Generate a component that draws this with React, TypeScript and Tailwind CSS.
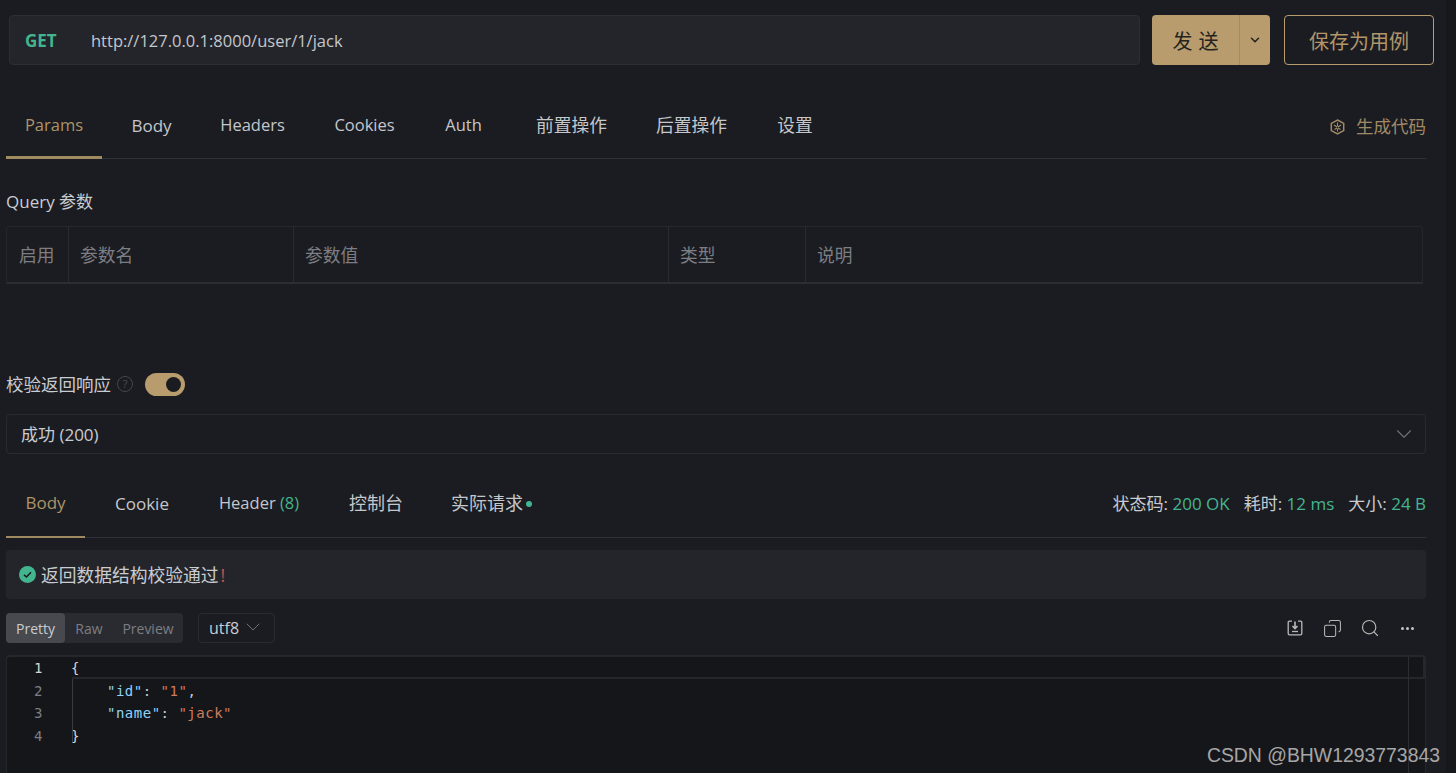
import { ChevronDown, Copy, Search } from "lucide-react"

const sans = "font-['Segoe_UI','Open_Sans','Noto_Sans_CJK_SC',sans-serif]"

const requestTabs = [
  { label: "Params", width: "w-[96px]", gap: "mr-[30px]", size: "text-[16.5px]", active: true },
  { label: "Body", width: "w-[39px]", gap: "mr-[50px]", size: "text-[17px]" },
  { label: "Headers", width: "w-[63px]", gap: "mr-[50px]", size: "text-[16.5px]" },
  { label: "Cookies", width: "w-[61px]", gap: "mr-[50px]", size: "text-[16.5px]" },
  { label: "Auth", width: "w-[37px]", gap: "mr-[54px]", size: "text-[16.5px]" },
  { label: "前置操作", width: "w-[71px]", gap: "mr-[49px]", size: "text-[17.75px]" },
  { label: "后置操作", width: "w-[71px]", gap: "mr-[50px]", size: "text-[17.75px]" },
  { label: "设置", width: "w-[36px]", gap: "", size: "text-[17.75px]" },
]

const columns = [
  { label: "启用", width: "w-[62px]" },
  { label: "参数名", width: "w-[225px]" },
  { label: "参数值", width: "w-[375px]" },
  { label: "类型", width: "w-[137px]" },
  { label: "说明", width: "flex-1" },
]

function CubeIcon() {
  return (
    <svg width="15" height="16" viewBox="0 0 15 16" fill="none" stroke="#a08a66" strokeWidth="1.5">
      <path d="M7.5 1 L13.7 4.4 V11.6 L7.5 15 L1.3 11.6 V4.4 Z" />
      <path d="M7.5 3.5 V7.5 M7.5 12.5 V9.5 M4 6 L7 8 M11 6 L8 8 M4.5 10.5 L7 9 M10.5 10.5 L8 9" strokeWidth="1.1" />
    </svg>
  )
}

function SaveIcon() {
  return (
    <svg width="16" height="16" viewBox="0 0 16 16" fill="none" stroke="#b8b8b8" strokeWidth="1.3">
      <path d="M5 1.2 H2.5 Q1.2 1.2 1.2 2.5 V13.5 Q1.2 14.8 2.5 14.8 H13.5 Q14.8 14.8 14.8 13.5 V2.5 Q14.8 1.2 13.5 1.2 H11" />
      <path d="M8 1.5 V8 M5.5 6 L8 8.5 L10.5 6" strokeWidth="1.6" />
      <path d="M5 11.5 H11" />
    </svg>
  )
}

export default function App() {
  return (
    <div className={`relative flex h-[773px] w-[1456px] overflow-hidden bg-[#1b1c21] text-[#c9ccd1] ${sans}`}>
      <main className="w-[1446px] shrink-0">
        {/* Request bar */}
        <div className="flex items-start pt-[15px] pl-[9px]">
          <div className="flex h-[50px] w-[1131px] items-center rounded-[4px] border border-[#2d2e34] bg-[#24252b] pt-[2px] pl-[15px]">
            <span className="w-[66px] text-[17px] font-bold text-[#43b58e]">GET</span>
            <span className="text-[16.5px] text-[#c4c7cc]">http://127.0.0.1:8000/user/1/jack</span>
          </div>
          <div className="ml-[12px] flex h-[50px] w-[118px] rounded-[4px] bg-[#b89c6d] text-[#25231f]">
            <span className="flex w-[88px] items-center justify-center border-r border-[#a58b60] pt-[3px] pl-[6px] text-[20px] tracking-[6px]">发送</span>
            <span className="flex flex-1 items-center justify-center">
              <ChevronDown size={14} strokeWidth={2.6} />
            </span>
          </div>
          <div className="ml-[14px] flex h-[50px] w-[150px] items-center justify-center rounded-[4px] border border-[#b89c6d] pt-[3px] text-[20px] text-[#b1966a]">
            保存为用例
          </div>
        </div>

        {/* Request tabs */}
        <div className="mt-[30px] ml-[6px] flex h-[64px] w-[1420px] border-b border-[#303136]">
          {requestTabs.map(tab => (
            <div
              key={tab.label}
              className={`flex items-center justify-center whitespace-nowrap ${tab.size} ${tab.width} ${tab.gap} ${tab.active ? "-mb-px border-b-[3px] border-[#a08a60] text-[#ac9468]" : "pb-[2px] text-[#c4c7cc]"}`}
            >
              {tab.label}
            </div>
          ))}
          <div className="ml-auto flex items-center gap-[11px] text-[17.5px] text-[#a08a66]">
            <CubeIcon />
            生成代码
          </div>
        </div>

        {/* Query params */}
        <div className="mt-[31px] ml-[6px] text-[17px] leading-[24px] text-[#c9ccd1]">Query 参数</div>
        <div className="mt-[12px] ml-[6px] flex h-[58px] w-[1417px] rounded-t-[4px] border-x border-t border-b-2 border-x-[#26272c] border-t-[#26272c] border-b-[#2c2d32] text-[17.75px] text-[#7c7e83]">
          {columns.map((col, i) => (
            <div
              key={col.label}
              className={`flex items-center pt-[2px] pl-[11px] ${col.width} ${i < columns.length - 1 ? "border-r border-[#2a2b30]" : ""} ${i === 0 ? "pl-[12px]" : ""}`}
            >
              {col.label}
            </div>
          ))}
        </div>

        {/* Response validation */}
        <div className="mt-[88px] ml-[6px] flex h-[24px] items-center text-[17.5px]">
          <span>校验返回响应</span>
          <span className="ml-[6px] flex h-[16px] w-[16px] items-center justify-center rounded-full border border-[#45464b] text-[11px] text-[#4c4d52]">?</span>
          <span className="ml-[12px] flex h-[23px] w-[40px] items-center justify-end rounded-full bg-[#b89c6d] pr-[4px]">
            <span className="h-[15px] w-[15px] rounded-full bg-[#1b1c21]" />
          </span>
        </div>
        <div className="mt-[18px] ml-[6px] flex h-[40px] w-[1420px] items-center justify-between rounded-[4px] border border-[#2a2b30] pr-[8px] pl-[14px] text-[17px]">
          <span className="pt-[1px]">成功 (200)</span>
          <ChevronDown size={26} strokeWidth={1} className="text-[#6e7075]" />
        </div>

        {/* Response tabs */}
        <div className="mt-[22px] ml-[6px] flex h-[62px] w-[1420px] border-b border-[#303136] text-[17px]">
          <div className="-mb-px flex w-[79px] items-center justify-center border-b-[2px] border-[#a08a60] pb-[6px] text-[#ac9468]">Body</div>
          <div className="ml-[30px] flex items-center pb-[6px] text-[#c4c7cc]">Cookie</div>
          <div className="ml-[50px] flex items-center pb-[6px] text-[16.5px] text-[#c4c7cc]">
            Header&nbsp;<span className="text-[#43b58e]">(8)</span>
          </div>
          <div className="ml-[50px] flex items-center pb-[6px] text-[18px] text-[#c4c7cc]">控制台</div>
          <div className="ml-[48px] flex items-center pb-[6px] text-[18px] text-[#c4c7cc]">
            实际请求
            <span className="ml-[3px] h-[6px] w-[6px] rounded-full bg-[#43b58e]" />
          </div>
          <div className="ml-auto flex items-center pb-[6px] text-[17px]">
            <span>状态码:&nbsp;</span>
            <span className="text-[#43b58e]">200 OK</span>
            <span className="ml-[14px]">耗时:&nbsp;</span>
            <span className="text-[#43b58e]">12 ms</span>
            <span className="ml-[14px]">大小:&nbsp;</span>
            <span className="text-[#43b58e]">24 B</span>
          </div>
        </div>

        {/* Validation result */}
        <div className="mt-[12px] ml-[6px] flex h-[49px] w-[1420px] items-center rounded-[4px] bg-[#24252b] pl-[13px] text-[17.75px]">
          <svg width="17" height="17" viewBox="0 0 17 17" className="mr-[5px]">
            <circle cx="8.5" cy="8.5" r="8.5" fill="#43b58e" />
            <path d="M5 8.8 L7.5 11 L12 6.2" fill="none" stroke="#1b1c21" strokeWidth="1.6" />
          </svg>
          <span className="pt-[2px]">返回数据结构校验通过</span>
          <span className="ml-[2px] pt-[2px] text-[#c2564f]">!</span>
        </div>

        {/* Body toolbar */}
        <div className="mt-[14px] ml-[6px] flex h-[31px] w-[1420px] items-start">
          <div className="flex h-[30px] w-[177px] rounded-[4px] bg-[#2a2b30] text-[14px] text-[#7c7e83]">
            <span className="flex w-[59px] items-center justify-center rounded-[4px] bg-[#48494e] text-[#c9ccd1]">Pretty</span>
            <span className="flex w-[48px] items-center justify-center">Raw</span>
            <span className="flex w-[70px] items-center justify-center">Preview</span>
          </div>
          <div className="ml-[15px] flex h-[30px] w-[77px] items-center rounded-[4px] border border-[#2a2b30] pl-[10px] text-[16px]">
            utf8
            <ChevronDown size={24} strokeWidth={1} className="ml-[2px] -translate-y-[1px] text-[#6e7075]" />
          </div>
          <div className="mr-[12px] ml-auto flex h-[30px] items-center text-[#b8b8b8]">
            <SaveIcon />
            <Copy size={19} strokeWidth={1.3} className="ml-[20px] -scale-x-100" />
            <Search size={20} strokeWidth={1.4} className="ml-[18px]" />
            <span className="ml-[21px] flex gap-[2px]">
              <i className="h-[3px] w-[3px] rounded-full bg-[#c4c4c4]" />
              <i className="h-[3px] w-[3px] rounded-full bg-[#c4c4c4]" />
              <i className="h-[3px] w-[3px] rounded-full bg-[#c4c4c4]" />
            </span>
          </div>
        </div>

        {/* Code viewer */}
        <div className="relative mt-[11px] ml-[6px] h-[120px] w-[1420px] rounded-t-[4px] border-t-2 border-r border-l border-[#26272c] bg-[#15161a] font-['DejaVu_Sans_Mono','Liberation_Mono',monospace] text-[14px] leading-[22.6px] tracking-[0.5px]">
          <div className="absolute top-0 right-0 left-[65px] h-[22px] border-r-2 border-b-2 border-[#26272c]" />
          <div className="absolute top-0 right-[16px] bottom-0 w-px bg-[#2c2d32]" />
          <div className="absolute top-[22px] bottom-[33px] left-[65px] w-px bg-[#3a3b40]" />
          {[
            [<span className="text-[#d4d4d4]">{"{"}</span>],
            [<span className="pl-[36px]"><span className="text-[#8fd3fa]">"id"</span>: <span className="text-[#ce7d5c]">"1"</span>,</span>],
            [<span className="pl-[36px]"><span className="text-[#8fd3fa]">"name"</span>: <span className="text-[#ce7d5c]">"jack"</span></span>],
            [<span className="text-[#d4d4d4]">{"}"}</span>],
          ].map((line, i) => (
            <div key={i} className="flex h-[22.6px]">
              <span className={`w-[36px] text-right ${i === 0 ? "text-[#d4d4d4]" : "text-[#7c7e83]"}`}>{i + 1}</span>
              <span className="ml-[28px] whitespace-pre text-[#c9ccd1]">{line}</span>
            </div>
          ))}
        </div>
      </main>

      {/* Scrollbar track */}
      <div className="flex-1 bg-[#17181c]" />

      {/* Watermark */}
      <div className="absolute right-[16px] bottom-[7px] font-['Liberation_Sans',sans-serif] text-[19.4px] leading-[22px] text-[#a6a6a6]">
        CSDN @BHW1293773843
      </div>
    </div>
  )
}
